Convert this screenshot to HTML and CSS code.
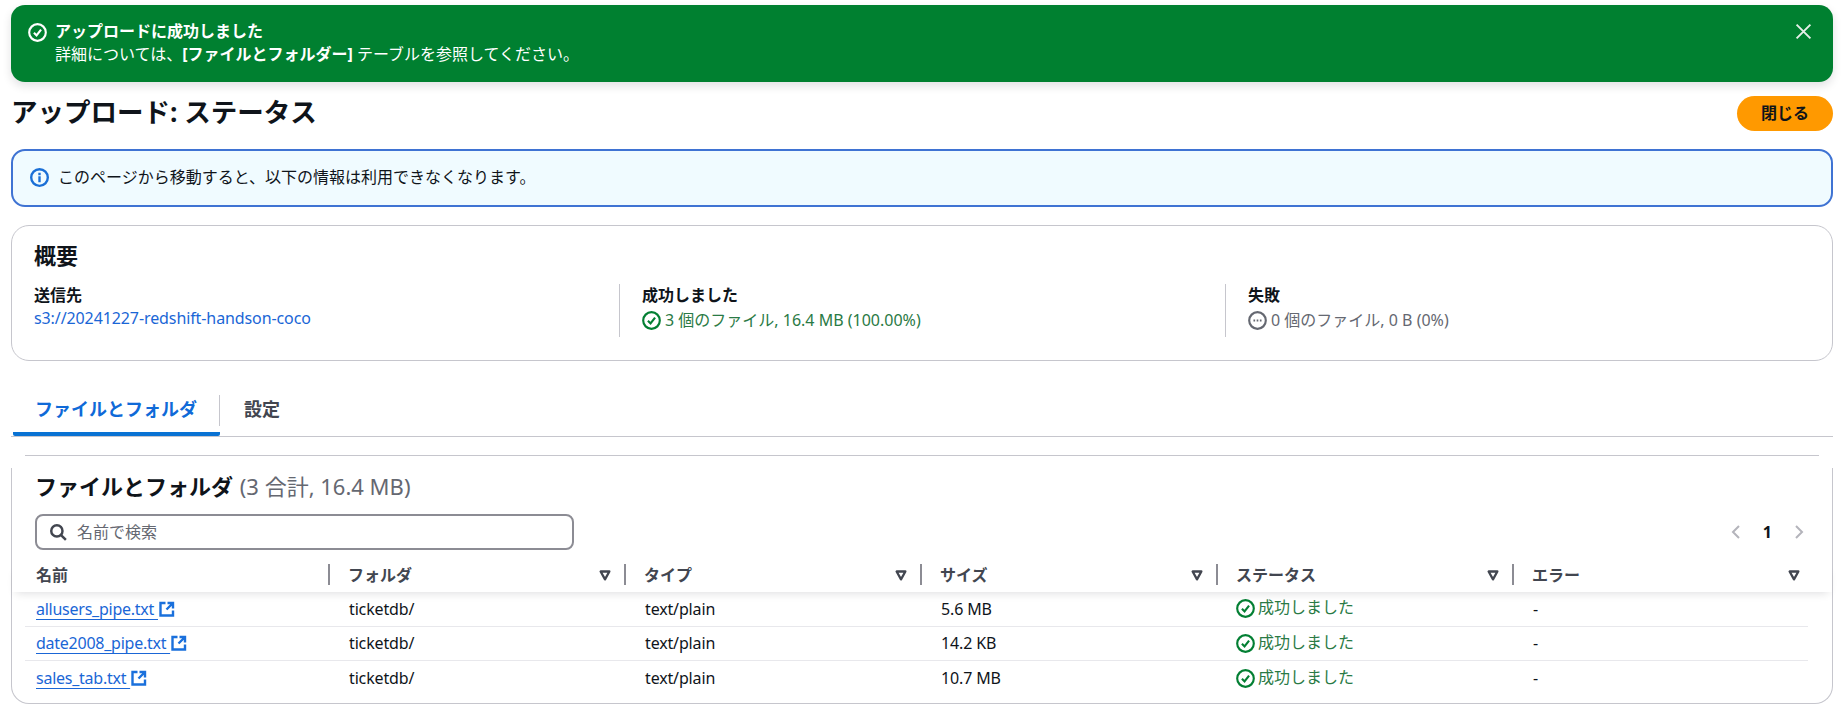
FILE: index.html
```html
<!DOCTYPE html>
<html lang="ja">
<head>
<meta charset="utf-8">
<title>アップロード: ステータス</title>
<link rel="stylesheet" href="styles.css">
</head>
<body>
<svg class="defs" width="0" height="0" aria-hidden="true">
  <symbol id="ok" viewBox="0 0 16 16"><circle cx="8" cy="8" r="7" fill="none" stroke="currentColor" stroke-width="1.8"/><path d="M5 8.2l2.2 2.3L11 5.6" fill="none" stroke="currentColor" stroke-width="1.8"/></symbol>
  <symbol id="ext" viewBox="0 0 16 16"><path d="M6.5 2H1.5v12.5h12.5V9.5" fill="none" stroke="currentColor" stroke-width="2.4"/><path d="M8.5 2H14v5.5M14 2L7.5 8.5" fill="none" stroke="currentColor" stroke-width="2.4"/></symbol>
  <symbol id="caret" viewBox="0 0 16 16"><path d="M3 4h10L8 13z" fill="none" stroke="currentColor" stroke-width="2.6" stroke-linejoin="round"/></symbol>
</svg>
<main class="page">
  <section class="flash">
    <svg class="icon flash-icon"><use href="#ok"/></svg>
    <div class="flash-text">
      <div class="flash-title">アップロードに成功しました</div>
      <div>詳細については、<b>[ファイルとフォルダー]</b> テーブルを参照してください。</div>
    </div>
    <svg class="flash-close" viewBox="0 0 16 16"><path d="M1.5 1.5l13 13M14.5 1.5l-13 13" fill="none" stroke="currentColor" stroke-width="1.8"/></svg>
  </section>

  <header class="page-head">
    <h1>アップロード: ステータス</h1>
    <button class="primary">閉じる</button>
  </header>

  <section class="info">
    <svg class="icon info-icon" viewBox="0 0 16 16"><circle cx="8" cy="8" r="7" fill="none" stroke="currentColor" stroke-width="2"/><path d="M8 7v5M8 4v2" fill="none" stroke="currentColor" stroke-width="2"/></svg>
    <span>このページから移動すると、以下の情報は利用できなくなります。</span>
  </section>

  <section class="summary">
    <h2>概要</h2>
    <div class="cols">
      <div class="col">
        <div class="label">送信先</div>
        <a class="link plain">s3://20241227-redshift-handson-coco</a>
      </div>
      <div class="col divided">
        <div class="label">成功しました</div>
        <div class="status ok"><svg class="icon"><use href="#ok"/></svg>3 個のファイル, 16.4 MB (100.00%)</div>
      </div>
      <div class="col divided">
        <div class="label">失敗</div>
        <div class="status pending"><svg class="icon" viewBox="0 0 16 16"><circle cx="8" cy="8" r="7" fill="none" stroke="currentColor" stroke-width="1.8"/><path d="M4.6 8h1.4M7.3 8h1.4M10 8h1.4" fill="none" stroke="currentColor" stroke-width="1.8"/></svg>0 個のファイル, 0 B (0%)</div>
      </div>
    </div>
  </section>

  <nav class="tabs">
    <a class="tab active">ファイルとフォルダ</a>
    <a class="tab">設定</a>
  </nav>

  <section class="files">
    <h2>ファイルとフォルダ <span class="counter">(3 合計, 16.4 MB)</span></h2>
    <div class="tools">
      <label class="search">
        <svg class="search-icon" viewBox="0 0 16 16"><circle cx="7" cy="7" r="5" fill="none" stroke="currentColor" stroke-width="2.2"/><path d="M10.5 10.5L15 15" fill="none" stroke="currentColor" stroke-width="2.2"/></svg>
        <span>名前で検索</span>
      </label>
      <div class="pager">
        <svg class="chev" viewBox="0 0 16 16"><path d="M11 2L5 8l6 6" fill="none" stroke="currentColor" stroke-width="2"/></svg>
        <b>1</b>
        <svg class="chev" viewBox="0 0 16 16"><path d="M5 2l6 6-6 6" fill="none" stroke="currentColor" stroke-width="2"/></svg>
      </div>
    </div>
    <div class="thead">
      <div class="th">名前</div>
      <div class="th">フォルダ<svg class="caret"><use href="#caret"/></svg></div>
      <div class="th">タイプ<svg class="caret"><use href="#caret"/></svg></div>
      <div class="th">サイズ<svg class="caret"><use href="#caret"/></svg></div>
      <div class="th">ステータス<svg class="caret"><use href="#caret"/></svg></div>
      <div class="th">エラー<svg class="caret"><use href="#caret"/></svg></div>
    </div>
    <div class="tbody">
      <div class="tr">
        <div class="td"><a class="link name">allusers_pipe.txt </a><svg class="ext"><use href="#ext"/></svg></div>
        <div class="td">ticketdb/</div><div class="td">text/plain</div><div class="td">5.6 MB</div>
        <div class="td status ok"><svg class="icon"><use href="#ok"/></svg><span class="up">成功しました</span></div><div class="td">-</div>
      </div>
      <div class="tr">
        <div class="td"><a class="link name">date2008_pipe.txt </a><svg class="ext"><use href="#ext"/></svg></div>
        <div class="td">ticketdb/</div><div class="td">text/plain</div><div class="td">14.2 KB</div>
        <div class="td status ok"><svg class="icon"><use href="#ok"/></svg><span class="up">成功しました</span></div><div class="td">-</div>
      </div>
      <div class="tr">
        <div class="td"><a class="link name">sales_tab.txt </a><svg class="ext"><use href="#ext"/></svg></div>
        <div class="td">ticketdb/</div><div class="td">text/plain</div><div class="td">10.7 MB</div>
        <div class="td status ok"><svg class="icon"><use href="#ok"/></svg><span class="up">成功しました</span></div><div class="td">-</div>
      </div>
    </div>
  </section>
</main>
</body>
</html>
```
FILE: styles.css
```css
* { box-sizing: border-box; }
html, body { margin: 0; padding: 0; background: #fff; }
body {
  font-family: "Noto Sans", "Noto Sans CJK JP", sans-serif;
  font-size: 16px;
  line-height: 20px;
  color: #0f141a;
  height: 708px;
  overflow: hidden;
}
.defs { position: absolute; }
.page { width: 1846px; padding: 5px 13px 0 11px; }
.icon { width: 19px; height: 19px; flex: none; }
h1, h2 { margin: 0; font-weight: 700; }

.flash {
  height: 77px;
  background: #008030;
  color: #fff;
  border-radius: 14px;
  display: flex;
  align-items: flex-start;
  padding: 15px 20px 0 17px;
  box-shadow: 0 4px 10px rgba(0, 7, 22, .12);
  line-height: 23px;
}
.flash-icon { margin: 3px 8px 0 0; }
.flash-text { flex: 1; }
.flash-title { font-weight: 700; }
.flash-close { width: 17px; height: 17px; margin: 3px 1px 0 0; color: #e6efe9; }

.page-head {
  display: flex;
  justify-content: space-between;
  align-items: flex-start;
  margin-top: 14px;
  height: 35px;
}
h1 { font-size: 26.5px; line-height: 34px; margin-top: -1px; }
.primary {
  width: 96px;
  height: 35px;
  background: #ff9900;
  border: 0;
  border-radius: 18px;
  font: 700 16px/20px "Noto Sans", "Noto Sans CJK JP", sans-serif;
  color: #0f141a;
  padding: 0 0 2px;
}

.info {
  margin-top: 18px;
  height: 58px;
  background: #f0fbff;
  border: 2px solid #3f73d3;
  border-radius: 14px;
  display: flex;
  align-items: center;
  padding: 0 0 2px 17px;
  gap: 9px;
}
.info-icon { color: #1a6fd6; }

.summary {
  margin-top: 18px;
  height: 136px;
  border: 1px solid #c6c6cd;
  border-radius: 18px;
  padding: 16px 22px 0;
}
.summary h2 { font-size: 22px; line-height: 26px; }
.cols { display: grid; grid-template-columns: 585px 606px 1fr; margin-top: 16px; }
.col { height: 53px; }
.divided { border-left: 1px solid #c6c6cd; padding-left: 22px; }
.label { font-weight: 700; line-height: 20px; margin-top: 1px; }
.col .link { display: flex; margin-top: 3px; letter-spacing: -.1px; }
.col .status { margin-top: 5px; }
.link { color: #1a66d6; }
.plain { text-decoration: none; }
.status { display: flex; align-items: center; gap: 4px; }
.ok { color: #2a7a45; }
.ok .icon { color: #037f33; }
.pending { color: #656871; }

.tabs {
  margin-top: 34px;
  height: 42px;
  border-bottom: 1px solid #c6c6cd;
  display: flex;
  align-items: flex-start;
}
.tab {
  font-weight: 700;
  font-size: 18px;
  color: #424650;
  height: 41px;
  line-height: 29px;
  padding: 0 24px;
  position: relative;
}
.tab.active {
  width: 207px;
  margin-left: 2px;
  padding: 0 22px;
  color: #0f6ad8;
  border-bottom: 4px solid #0972d3;
  border-radius: 0 0 2px 2px;
}
.tab.active::after {
  content: "";
  position: absolute;
  right: 0;
  top: 0;
  height: 31px;
  width: 1px;
  background: #c6c6cd;
}

.files {
  margin-top: 18px;
  height: 249px;
  border: 1px solid #c6c6cd;
  border-top: 0;
  border-radius: 0 0 18px 18px;
  position: relative;
}
.files::before {
  content: "";
  position: absolute;
  left: -1px;
  right: -1px;
  top: 0;
  height: 13px;
  background: #fff;
}
.files::after {
  content: "";
  position: absolute;
  left: 13px;
  right: 13px;
  top: 0;
  height: 1px;
  background: #c6c6cd;
}
.files h2 { font-size: 22px; line-height: 26px; padding: 18px 0 0 23px; position: relative; }
.counter { font-weight: 400; color: #656871; margin-left: 1px; }
.tools {
  display: flex;
  justify-content: space-between;
  align-items: center;
  margin-top: 15px;
  padding: 0 25px 0 23px;
}
.search {
  width: 539px;
  height: 36px;
  border: 2px solid #8c8c94;
  border-radius: 8px;
  display: flex;
  align-items: center;
  gap: 10px;
  padding-left: 12px;
  color: #656871;
}
.search-icon { width: 18px; height: 18px; color: #424650; }
.pager { display: flex; align-items: center; gap: 19px; color: #0f141a; }
.chev { width: 16px; height: 16px; color: #b4b4bb; }
.thead {
  display: grid;
  grid-template-columns: 303px repeat(4, 296px) 1fr;
  margin-top: 14px;
  height: 28px;
  padding: 0 0 0 13px;
  box-shadow: 0 5px 10px -4px rgba(0, 7, 22, .14);
  position: relative;
  background: #fff;
}
.th {
  height: 21px;
  font-weight: 700;
  color: #424650;
  line-height: 20px;
  display: flex;
  justify-content: space-between;
  align-items: center;
  padding: 0 12px 0 18px;
  border-left: 2px solid #8c8c94;
}
.th:first-child { border-left: 0; padding-left: 11px; }
.th:last-child { padding-right: 31px; }
.caret { width: 14px; height: 14px; color: #424650; }
.tbody { padding: 0 24px 0 13px; letter-spacing: -.15px; }
.tr {
  display: grid;
  grid-template-columns: 304px repeat(4, 296px) 1fr;
  height: 34.5px;
  border-bottom: 1px solid #e8e8ec;
  align-items: center;
}
.tr:last-child { border-bottom: 0; }
.td { padding-left: 20px; display: flex; align-items: center; }
.td:first-child { padding-left: 11px; }
.td.status { gap: 3px; padding-left: 19px; }
.up { margin-top: -3px; letter-spacing: 0; }
.name { text-decoration: underline; text-underline-offset: 4px; white-space: pre; letter-spacing: -.25px; }
.ext { width: 16px; height: 16px; color: #1a70dc; margin-left: 1px; }
```
